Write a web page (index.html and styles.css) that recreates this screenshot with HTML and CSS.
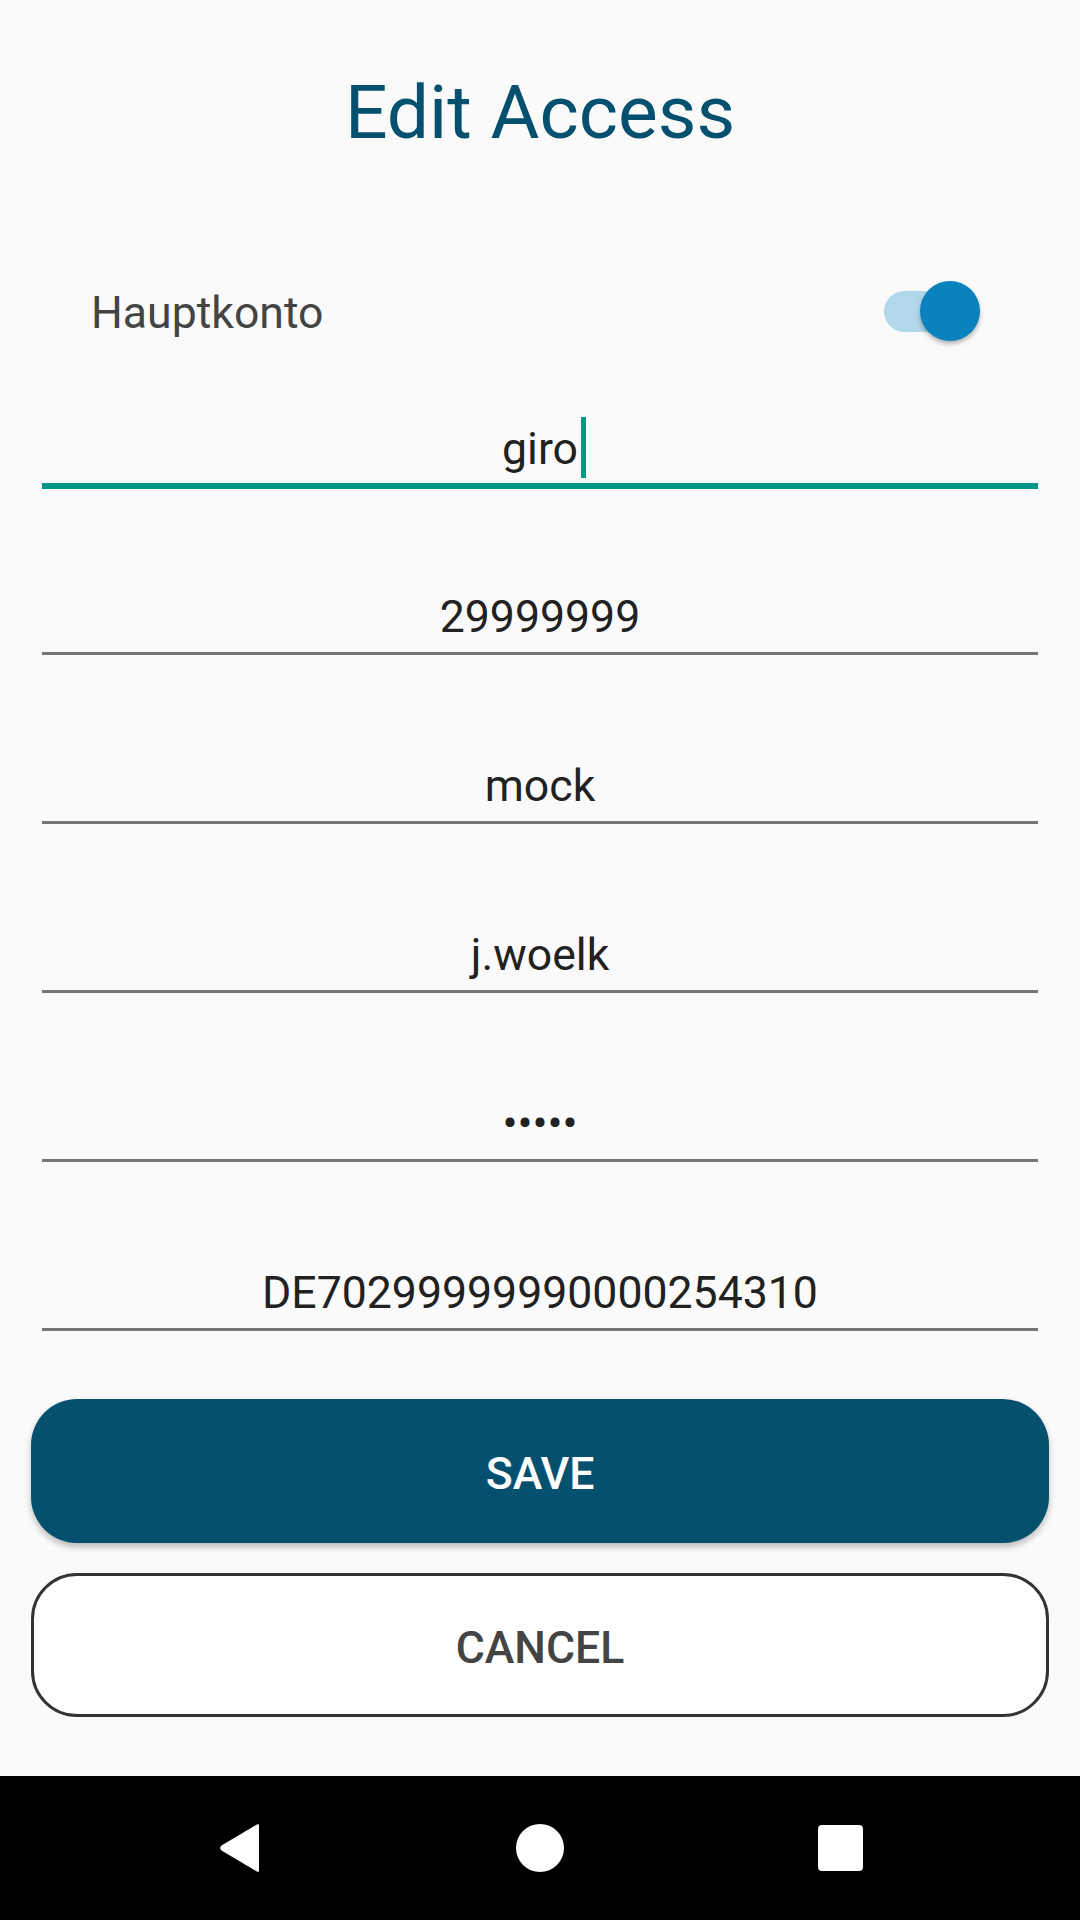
FILE: index.html
```html
<!DOCTYPE html>
<html lang="de">
<head>
<meta charset="utf-8">
<title>Edit Access</title>
<link rel="stylesheet" href="styles.css">
</head>
<body>
<div class="screen">
  <main class="content">
    <h1 class="title">Edit Access</h1>
    <div class="switch-row">
      <span class="switch-label">Hauptkonto</span>
      <span class="switch" role="switch" aria-checked="true">
        <span class="switch-track"></span>
        <span class="switch-thumb"></span>
      </span>
    </div>
    <div class="field focused">
      <div class="field-text"><span class="value caret">giro</span></div>
      <div class="field-line"></div>
    </div>
    <div class="field">
      <div class="field-text"><span class="value">29999999</span></div>
      <div class="field-line"></div>
    </div>
    <div class="field">
      <div class="field-text"><span class="value">mock</span></div>
      <div class="field-line"></div>
    </div>
    <div class="field">
      <div class="field-text"><span class="value">j.woelk</span></div>
      <div class="field-line"></div>
    </div>
    <div class="field">
      <div class="field-text"><span class="value dots">•••••</span></div>
      <div class="field-line"></div>
    </div>
    <div class="field">
      <div class="field-text"><span class="value">DE70299999990000254310</span></div>
      <div class="field-line"></div>
    </div>
    <div class="buttons">
      <button class="btn btn-save">SAVE</button>
      <button class="btn btn-cancel">CANCEL</button>
    </div>
  </main>
  <nav class="navbar">
    <div class="nav-cell">
      <svg width="42" height="50" viewBox="0 0 42 50"><path d="M40 3 Q40 0 38 1.5 L2.5 22.5 Q0 25 2.5 27.5 L38 48.5 Q40 50 40 47 Z" fill="#fff"/></svg>
    </div>
    <div class="nav-cell">
      <span class="nav-home"></span>
    </div>
    <div class="nav-cell">
      <span class="nav-recents"></span>
    </div>
  </nav>
</div>
</body>
</html>
```
FILE: styles.css
```css
* { box-sizing: border-box; }
html, body { margin: 0; padding: 0; }
body {
  background: #fafafa;
  font-family: Roboto, "Noto Sans", "Liberation Sans", sans-serif;
}
.screen {
  width: 1080px;
  height: 1920px;
  display: flex;
  flex-direction: column;
}
.content {
  flex: 1;
  display: flex;
  flex-direction: column;
}
.title {
  margin: 73px 0 0;
  font-size: 75px;
  line-height: 79px;
  font-weight: 400;
  color: #06506f;
  text-align: center;
}
.switch-row {
  margin-top: 119px;
  height: 80px;
  padding: 0 100px 0 91px;
  display: flex;
  align-items: center;
  justify-content: space-between;
}
.switch-label {
  font-size: 44.6px;
  line-height: 1;
  padding-top: 4px;
  color: #444;
}
.switch {
  position: relative;
  width: 96px;
  height: 60px;
}
.switch-track {
  position: absolute;
  left: 0;
  top: 10px;
  width: 82px;
  height: 41px;
  border-radius: 21px;
  background: #b1d7ea;
}
.switch-thumb {
  position: absolute;
  right: 0;
  top: 0;
  width: 60px;
  height: 60px;
  border-radius: 50%;
  background: #0a82bd;
  box-shadow: 0 3px 4px rgba(0,0,0,0.28);
}
.field {
  margin: 0 42px;
  padding-top: 109.4px;
}
.field.focused { padding-top: 75.5px; }
.field-text {
  text-align: center;
  font-size: 44.6px;
  line-height: 44.6px;
  color: #212121;
}
.value { position: relative; }
.caret::after {
  content: "";
  position: absolute;
  left: calc(100% + 3px);
  top: -6px;
  width: 5px;
  height: 61px;
  background: #009688;
}
.field-line {
  margin-top: 12px;
  height: 3px;
  background: #767676;
}
.field.focused .field-line {
  height: 6px;
  margin-bottom: -3px;
  background: #009688;
}
.buttons {
  margin: 68px 31px 0;
  display: flex;
  flex-direction: column;
  gap: 30px;
}
.btn {
  height: 144px;
  border-radius: 46px;
  font-family: Roboto, "Noto Sans", "Liberation Sans", sans-serif;
  font-size: 44.6px;
  font-weight: 500;
  padding: 5px 0 0;
}
.btn-save {
  background: #06506f;
  color: #fff;
  border: none;
  box-shadow: 0 4px 6px rgba(0,0,0,0.25);
}
.btn-cancel {
  background: #fff;
  color: #444;
  border: 3px solid #333;
}
.navbar {
  height: 144px;
  background: #000;
  display: flex;
  justify-content: center;
  align-items: center;
}
.nav-cell {
  width: 300px;
  display: flex;
  justify-content: center;
  align-items: center;
}
.nav-home {
  width: 48px;
  height: 48px;
  border-radius: 50%;
  background: #fff;
}
.nav-recents {
  width: 45px;
  height: 46px;
  border-radius: 4px;
  background: #fff;
}
```
